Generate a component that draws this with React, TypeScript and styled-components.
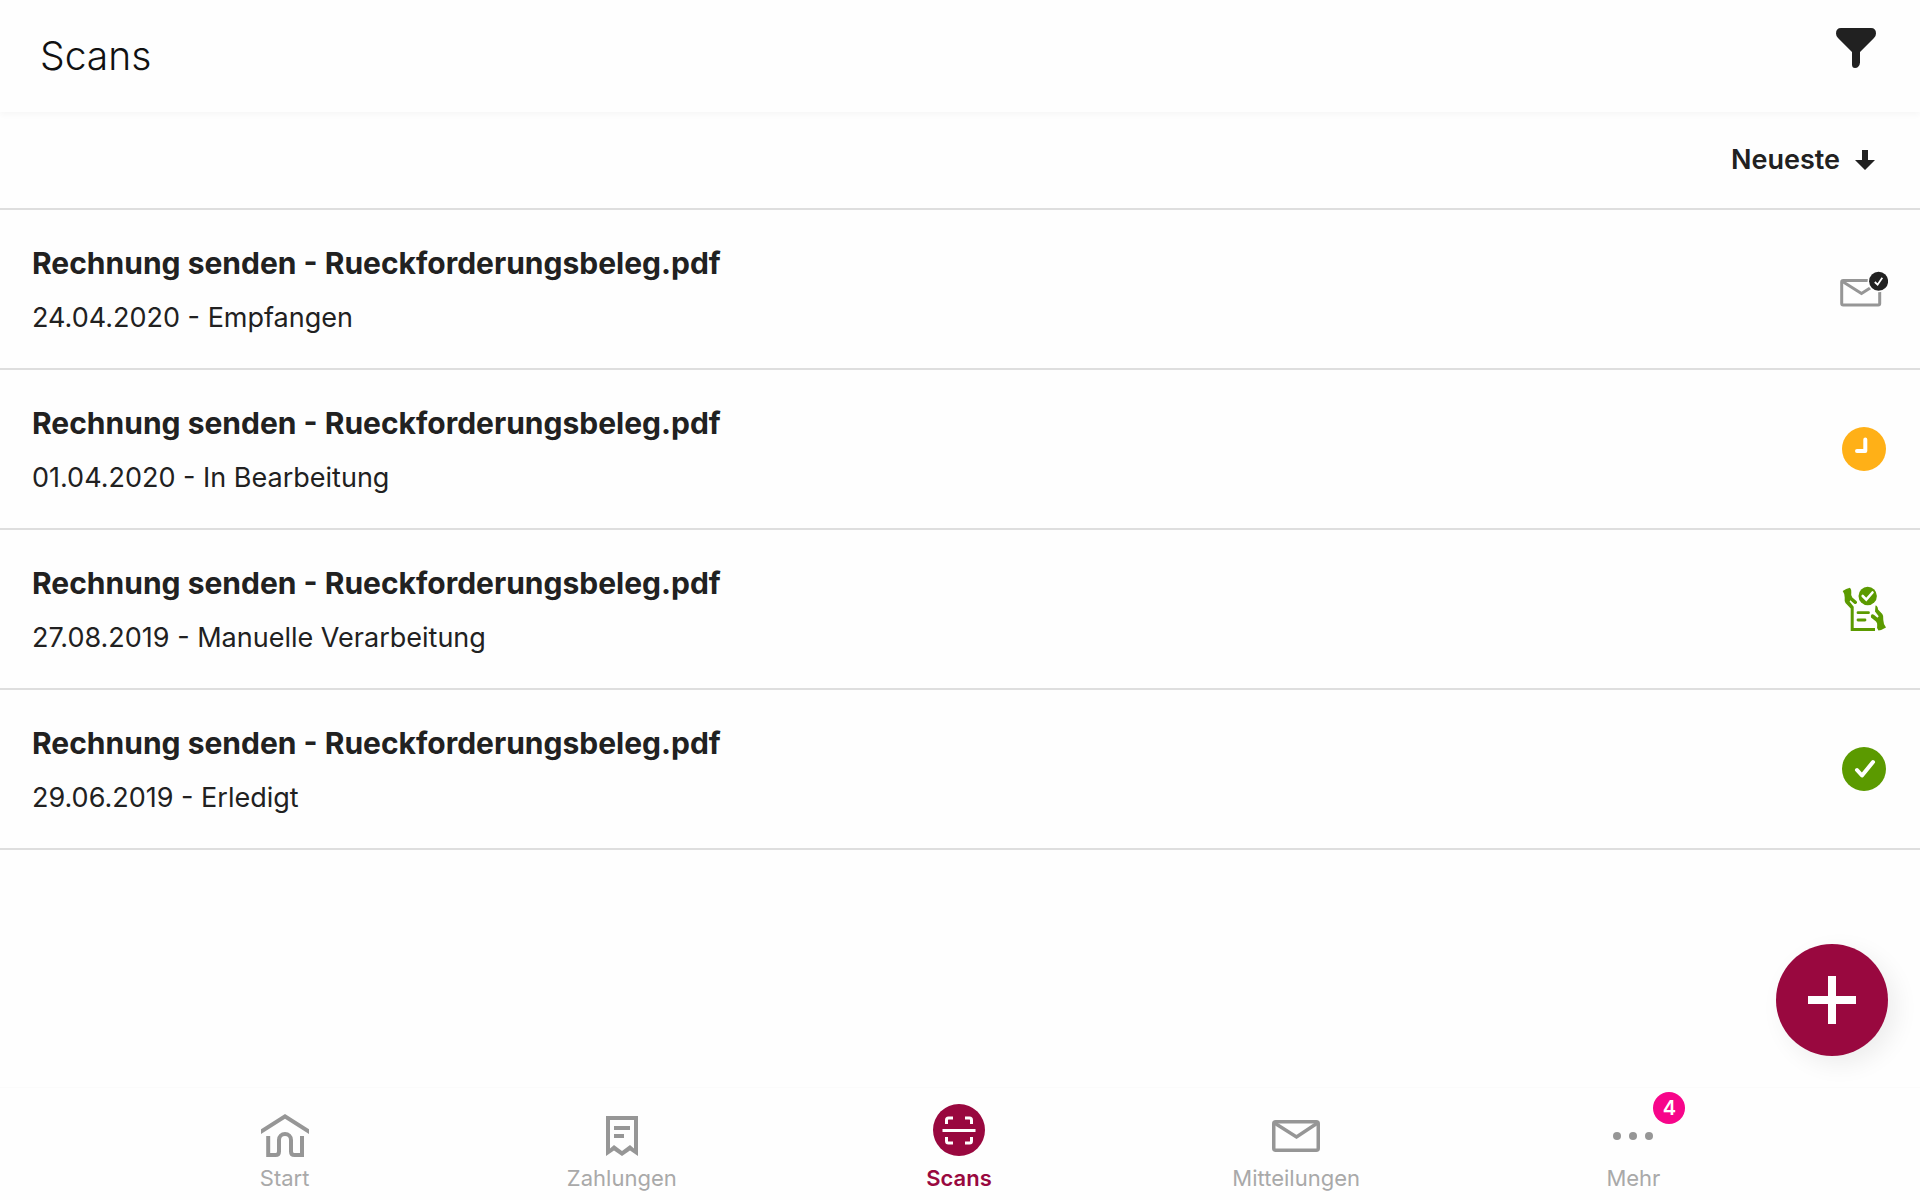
import React from "react";
import styled, { createGlobalStyle } from "styled-components";

const GlobalStyle = createGlobalStyle`
  *, *::before, *::after { box-sizing: border-box; }
  body {
    margin: 0;
    background: #fefefe;
    color: #212121;
    font-family: Inter, "Liberation Sans", sans-serif;
  }
  button { border: 0; padding: 0; background: none; color: inherit; font: inherit; cursor: pointer; }
  svg { display: block; flex: none; }
`;

const Page = styled.div`
  display: flex;
  flex-direction: column;
  min-height: 100vh;
`;

const Header = styled.header`
  display: flex;
  align-items: flex-start;
  justify-content: space-between;
  height: 112px;
  padding: 28px 44px 0 40px;
  background: #fefefe;
  box-shadow: 0 3px 6px rgba(0, 0, 0, 0.03);
`;

const Title = styled.h1`
  margin: 0;
  color: #111;
  font-size: 39px;
  font-weight: 300;
  line-height: 56px;
`;

const SortBar = styled.div`
  display: flex;
  align-items: center;
  justify-content: flex-end;
  height: 98px;
  padding: 0 45px 0 32px;
  border-bottom: 2px solid #dedede;
`;

const SortButton = styled.button`
  && {
    display: flex;
    align-items: center;
    gap: 15px;
    font-size: 27px;
    font-weight: 600;
    line-height: 40px;
  }
`;

const List = styled.ul`
  flex: 1;
  margin: 0;
  padding: 0;
  list-style: none;
`;

const Row = styled.li`
  display: flex;
  align-items: center;
  justify-content: space-between;
  height: 160px;
  padding: 0 32px;
  border-bottom: 2px solid #dedede;
`;

const RowText = styled.div`
  display: flex;
  flex-direction: column;
  gap: 15px;
  padding-top: 2px;
`;

const FileName = styled.h2`
  margin: 0;
  font-size: 30px;
  font-weight: 650;
  line-height: 40px;
`;

const Meta = styled.p`
  margin: 0;
  font-size: 27px;
  line-height: 40px;
`;

const Fab = styled.button`
  && {
    position: fixed;
    right: 32px;
    bottom: 144px;
    display: grid;
    place-items: center;
    width: 112px;
    height: 112px;
    border-radius: 50%;
    background: #99083f;
    box-shadow: 8px 8px 24px rgba(0, 0, 0, 0.07);
  }
`;

const Nav = styled.nav`
  display: grid;
  grid-template-columns: repeat(5, 1fr);
  padding: 16px 118px 8px 116px;
  background: #fefefe;
  border-top: 1px solid #fbfbfb;
`;

const Tab = styled.button<{ $active?: boolean }>`
  && {
    display: flex;
    flex-direction: column;
    align-items: center;
    color: ${(p) => (p.$active ? "#99083f" : "#a9a9a9")};
    font-size: 22px;
    font-weight: ${(p) => (p.$active ? 600 : 400)};
    line-height: 28px;
  }
`;

const TabIcon = styled.span<{ $active?: boolean }>`
  position: relative;
  display: grid;
  place-items: center;
  width: 52px;
  height: 60px;
  padding: ${(p) => (p.$active ? "0 0 8px" : "4px 0 0")};
`;

const Badge = styled.span`
  position: absolute;
  top: -12px;
  right: -26px;
  width: 32px;
  height: 32px;
  border-radius: 50%;
  background: #f7058a;
  color: #fff;
  font-size: 20px;
  font-weight: 600;
  line-height: 32px;
  text-align: center;
`;

const FilterIcon = () => (
  <svg width="40" height="40" viewBox="0 0 40 40" fill="#212121">
    <path d="M5 0H35Q40 0 40 5.500Q40 8 38 10L24 24V34.500Q24 37 22 39Q21 40 19 40Q16 40 16 36.500V24L2 10Q0 8 0 5.500Q0 0 5 0Z" />
  </svg>
);

const ArrowDown = () => (
  <svg width="20" height="20" viewBox="0 0 20 20" fill="#212121">
    <path d="M7 0H13V10H20L10 20L0 10H7Z" />
  </svg>
);

const ReceivedIcon = () => (
  <svg width="48" height="48" viewBox="0 0 48 48" fill="none">
    <rect x="1.700" y="15.500" width="38" height="24.500" rx="1.500" stroke="#969696" strokeWidth="3" />
    <path d="M2.500 16.500L21.500 28.500L38 18" stroke="#969696" strokeWidth="3" />
    <circle cx="38.600" cy="16.300" r="11" fill="#fefefe" />
    <circle cx="38.600" cy="16.300" r="9.500" fill="#212121" />
    <path d="M34.800 17L37.600 19.700L42.300 12.800" stroke="#fff" strokeWidth="1.800" />
  </svg>
);

const PendingIcon = () => (
  <svg width="48" height="48" viewBox="0 0 48 48" fill="none">
    <circle cx="24" cy="24" r="22" fill="#ffb017" />
    <path d="M25.300 14.500V26H17" stroke="#fff" strokeWidth="4" strokeLinecap="round" strokeLinejoin="round" />
  </svg>
);

const ManualIcon = () => (
  <svg width="48" height="48" viewBox="0 0 48 48" fill="none">
    <circle cx="27.700" cy="11" r="9.200" fill="#5b9a00" />
    <path d="M22.700 11L26.300 14.700L32.500 7.500" stroke="#fff" strokeWidth="2.600" strokeLinecap="round" />
    <path
      d="M2.700 6Q6 3.500 10 2.700Q11.800 5 11.300 7.500Q10.600 10.500 12.300 12.500L16.700 16.300Q17.800 18 16 19Q15 19.300 13.700 18.200L10.300 15.200L9.600 16.500L13.700 21.700V43H35V46H10.700V23.500L5.500 18Q4.300 16.500 4.700 12.500Q4.900 9 2.700 6Z"
      fill="#5b9a00"
    />
    <path
      d="M35.500 20.500Q37.800 20.800 38 24.500L42.300 29Q43.800 30.800 43.300 35Q43.200 38.500 46 42.500Q42 45 38.500 45.500Q36.300 43 37.200 40Q37.500 38 36 36.500L31 32.500Q30.300 30.500 31.800 29.300Q33 29 34.500 30.200L37.500 32.700L38.700 31.300L35 26.500Z"
      fill="#5b9a00"
    />
    <path d="M18 27.700H28.500M18 35H25" stroke="#5b9a00" strokeWidth="2.800" strokeLinecap="round" />
  </svg>
);

const DoneIcon = () => (
  <svg width="48" height="48" viewBox="0 0 48 48" fill="none">
    <circle cx="24" cy="24" r="22" fill="#5b9a00" />
    <path d="M17 25L22 30.500L33 17" stroke="#fff" strokeWidth="4" strokeLinecap="round" strokeLinejoin="round" />
  </svg>
);

const HomeIcon = () => (
  <svg width="48" height="44" viewBox="0 0 48 44" fill="none">
    <path d="M0 15.300L24 0L48 15.300V20L24 4.700L0 20Z" fill="#969696" />
    <path
      d="M7.200 22V41H14.500Q18 41 18 37.500V26a6 6 0 0 1 12 0V37.500Q30 41 33.500 41H41V22"
      stroke="#969696"
      strokeWidth="4"
    />
  </svg>
);

const ReceiptIcon = () => (
  <svg width="32" height="40" viewBox="0 0 32 40" fill="#969696">
    <path
      fillRule="evenodd"
      d="M0 0H32V40L24 34.500L16 40L8 34.500L0 40ZM4 4V32.500L8 29L16 35L24 29L28 32.500V4Z"
    />
    <path d="M8 10H24V14H8ZM8 18H18V22H8Z" />
  </svg>
);

const ScanIcon = () => (
  <svg width="52" height="52" viewBox="0 0 52 52" fill="none" stroke="#fff" strokeWidth="3">
    <circle cx="26" cy="26" r="26" fill="#99083f" stroke="none" />
    <path d="M13.500 20V16Q13.500 14 15.500 14H20M32 14H36.500Q38.500 14 38.500 16V20M38.500 33V37Q38.500 39 36.500 39H32M20 39H15.500Q13.500 39 13.500 37V33" />
    <path d="M9.500 26.500H42.500" />
  </svg>
);

const MailIcon = () => (
  <svg width="48" height="32" viewBox="0 0 48 32" fill="none" stroke="#969696" strokeWidth="3.500">
    <rect x="1.750" y="1.750" width="44.500" height="28.500" rx="2" />
    <path d="M2.500 3L24.500 17L45.500 3" />
  </svg>
);

const MoreIcon = () => (
  <svg width="40" height="8" viewBox="0 0 40 8" fill="#969696">
    <circle cx="4" cy="4" r="4" />
    <circle cx="20" cy="4" r="4" />
    <circle cx="36" cy="4" r="4" />
  </svg>
);

const PlusIcon = () => (
  <svg width="48" height="48" viewBox="0 0 48 48" fill="#fff">
    <path d="M20 0H28V20H48V28H28V48H20V28H0V20H20Z" />
  </svg>
);

const scans = [
  { date: "24.04.2020", status: "Empfangen", Icon: ReceivedIcon },
  { date: "01.04.2020", status: "In Bearbeitung", Icon: PendingIcon },
  { date: "27.08.2019", status: "Manuelle Verarbeitung", Icon: ManualIcon },
  { date: "29.06.2019", status: "Erledigt", Icon: DoneIcon },
];

const tabs = [
  { label: "Start", Icon: HomeIcon },
  { label: "Zahlungen", Icon: ReceiptIcon },
  { label: "Scans", Icon: ScanIcon, active: true },
  { label: "Mitteilungen", Icon: MailIcon },
  { label: "Mehr", Icon: MoreIcon, count: 4 },
];

export default function App() {
  return (
    <Page>
      <GlobalStyle />
      <Header>
        <Title>Scans</Title>
        <button type="button" aria-label="Filter">
          <FilterIcon />
        </button>
      </Header>
      <SortBar>
        <SortButton type="button">
          Neueste
          <ArrowDown />
        </SortButton>
      </SortBar>
      <List>
        {scans.map(({ date, status, Icon }) => (
          <Row key={date}>
            <RowText>
              <FileName>Rechnung senden - Rueckforderungsbeleg.pdf</FileName>
              <Meta>
                {date} - {status}
              </Meta>
            </RowText>
            <Icon />
          </Row>
        ))}
      </List>
      <Fab type="button" aria-label="Neuer Scan">
        <PlusIcon />
      </Fab>
      <Nav>
        {tabs.map(({ label, Icon, active, count }) => (
          <Tab key={label} type="button" $active={active}>
            <TabIcon $active={active}>
              <Icon />
              {count && <Badge>{count}</Badge>}
            </TabIcon>
            {label}
          </Tab>
        ))}
      </Nav>
    </Page>
  );
}
